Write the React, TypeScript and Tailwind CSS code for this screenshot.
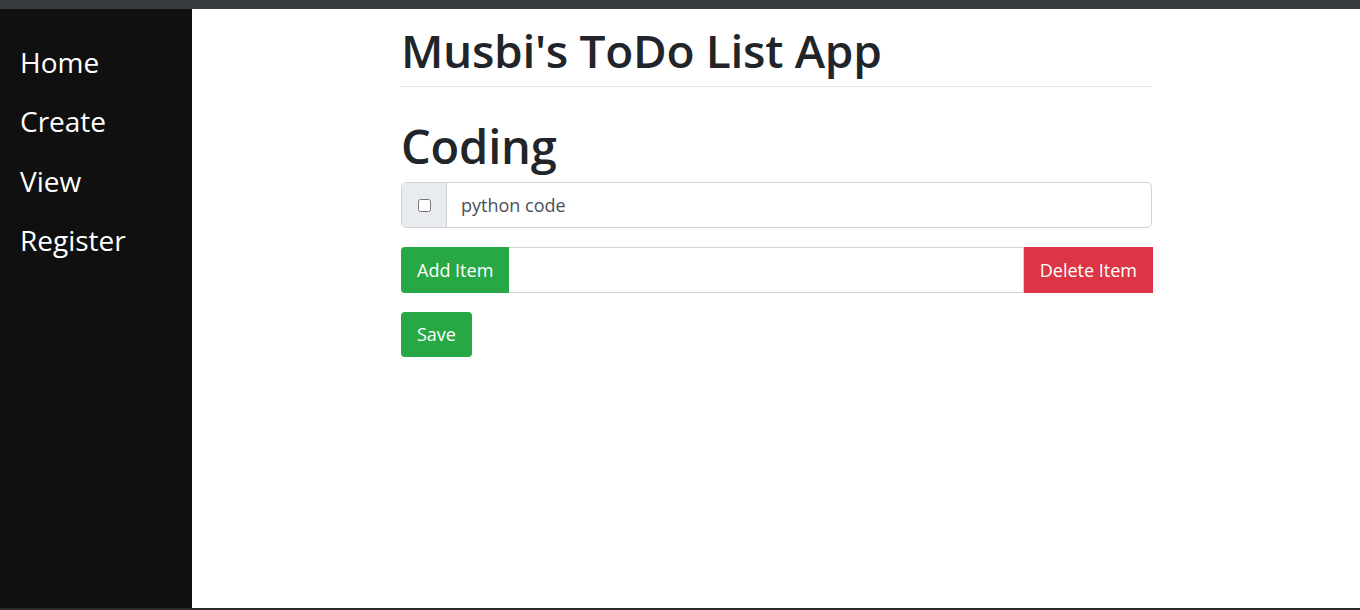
import { useState } from 'react';

const font = { fontFamily: '"Open Sans", "Noto Sans", Arial, sans-serif' };

export default function App() {
  const [done, setDone] = useState(false);
  const [item, setItem] = useState('');

  return (
    <div className="h-[610px] w-full flex flex-col overflow-hidden" style={font}>
      <div className="h-[9px] bg-[#363c40]" />
      <div className="flex-1 flex">
        {/* sidebar */}
        <nav className="w-[192px] bg-[#101010] pt-[24px] pl-5 flex flex-col">
          {['Home', 'Create', 'View', 'Register'].map((l) => (
            <a key={l} href="#" className="text-white text-[28px] leading-[59.4px]">
              {l}
            </a>
          ))}
        </nav>

        <main className="flex-1 bg-white">
          <div className="ml-[209px] w-[751px] text-[#212529]">
            <h1 className="text-[46px] leading-[56px] mt-[13px] font-semibold tracking-[-0.3px]">Musbi's ToDo List App</h1>
            <hr className="mt-[8px] border-t border-[#e5e5e5]" />
            <h2 className="text-[47px] leading-[56px] mt-[31px] font-semibold tracking-[-0.2px]">Coding</h2>

            <div className="mt-[8px] flex h-[46px] border border-[#ced4da] rounded-[5px] overflow-hidden">
              <div className="w-[45px] bg-[#e9ecef] border-r border-[#ced4da] flex items-center justify-center">
                <input
                  type="checkbox"
                  checked={done}
                  onChange={() => setDone(!done)}
                  className="w-[13px] h-[13px]"
                />
              </div>
              <div className="flex-1 flex items-center pl-[14px] text-[18px] text-[#495057]">python code</div>
            </div>

            <div className="mt-[19px] flex h-[46px] w-[752px]">
              <button className="bg-[#28a745] text-white text-[18px] px-[16px] rounded-l-[4px]">Add Item</button>
              <input
                value={item}
                onChange={(e) => setItem(e.target.value)}
                className="flex-1 border-y border-[#ced4da] outline-none px-3"
              />
              <button className="bg-[#dc3545] text-white text-[18px] px-[16px] border-l border-[#ced4da]">Delete Item</button>
            </div>

            <button className="mt-[19px] h-[45px] bg-[#28a745] text-white text-[18px] px-[16px] rounded-[4px]">Save</button>
          </div>
        </main>
      </div>
      <div className="h-[2px] bg-[#2b2b2b]" />
    </div>
  );
}
